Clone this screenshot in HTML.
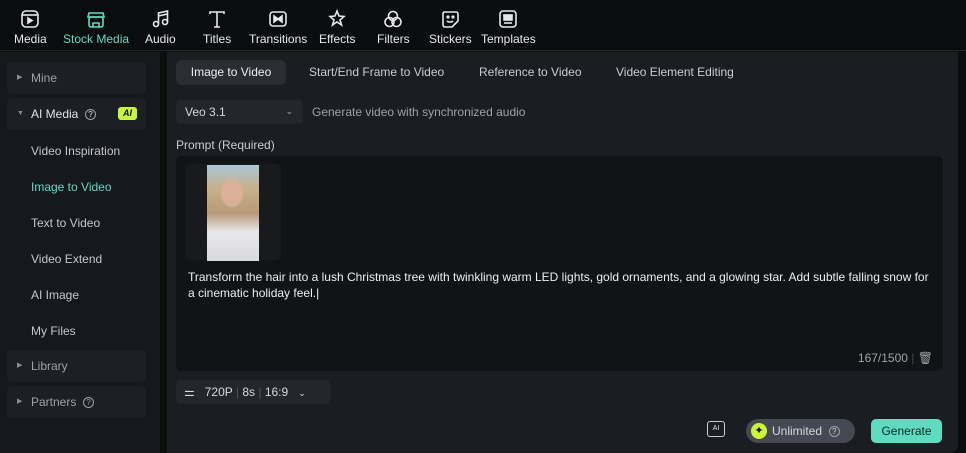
<!DOCTYPE html>
<html><head><meta charset="utf-8"><style>
*{box-sizing:border-box;margin:0;padding:0}
body{width:966px;height:453px;background:#0c0d0f;font-family:"Liberation Sans",sans-serif;color:#d6d8dc;position:relative;overflow:hidden;font-size:12px}
.top{position:absolute;left:0;top:0;width:966px;height:51px;background:#0b0c0e;border-bottom:1px solid #23262b}
.tb{position:absolute;top:8px;text-align:center;font-size:12px;color:#e6e8ea}
.tb svg{display:block;margin:0 auto 2px;width:22px;height:22px}
.side{position:absolute;left:0;top:52px;width:160px;height:401px;background:#15181c}
.sh{position:absolute;left:7px;width:139px;height:32px;background:#1c1f24;border-radius:5px;color:#9ea2a8;font-size:12px;line-height:32px;padding-left:24px}
.sh .tri{position:absolute;left:10px;top:0;font-size:7px;color:#8a8e94}
.si{position:absolute;left:31px;font-size:12px;color:#c4c7cb}
.main{position:absolute;left:167px;top:52px;width:791px;height:401px;background:#1a1d21;border-radius:0 0 8px 0}
.tab{position:absolute;top:8px;height:25px;line-height:25px;font-size:12px;color:#c9ccd0}
.q{display:inline-block;width:11px;height:11px;border:1px solid #9ea2a8;border-radius:50%;font-size:8px;line-height:9px;text-align:center;vertical-align:middle}
</style></head><body>
<div class="top">
<div class="tb" style="left:14px">
<svg viewBox="0 0 22 22" fill="none" stroke="#e6e8ea" stroke-width="1.6"><rect x="3" y="3" width="16" height="16" rx="4"/><line x1="3" y1="7" x2="19" y2="7"/><path d="M9 10l4 2.5-4 2.5z" fill="#e6e8ea"/></svg>Media</div>
<div class="tb" style="left:63px;color:#5fdcc0">
<svg viewBox="0 0 22 22" fill="none" stroke="#5fdcc0" stroke-width="1.6"><path d="M4 5h14l1 4H3z"/><rect x="4" y="9" width="14" height="10" rx="2"/><path d="M8 19v-4h6v4"/></svg>Stock Media</div>
<div class="tb" style="left:145px">
<svg viewBox="0 0 22 22" fill="none" stroke="#e6e8ea" stroke-width="1.6"><circle cx="7" cy="16" r="2.5"/><circle cx="16" cy="14" r="2.5"/><path d="M9.5 16V5l9-2v11M9.5 8l9-2"/></svg>Audio</div>
<div class="tb" style="left:203px">
<svg viewBox="0 0 22 22" fill="none" stroke="#e6e8ea" stroke-width="1.6"><path d="M4 6V4h14v2M11 4v15M8 19h6"/></svg>Titles</div>
<div class="tb" style="left:249px">
<svg viewBox="0 0 22 22" fill="none" stroke="#e6e8ea" stroke-width="1.6"><rect x="3" y="4" width="16" height="14" rx="3"/><path d="M7 8l4 3-4 3zM15 8l-4 3 4 3z" fill="#e6e8ea"/></svg>Transitions</div>
<div class="tb" style="left:319px">
<svg viewBox="0 0 22 22" fill="none" stroke="#e6e8ea" stroke-width="1.6"><path d="M11 3l2 5 5 .5-4 3.5 1.5 5L11 14l-4.5 3 1.5-5-4-3.5 5-.5z"/></svg>Effects</div>
<div class="tb" style="left:377px">
<svg viewBox="0 0 22 22" fill="none" stroke="#e6e8ea" stroke-width="1.6"><circle cx="11" cy="8" r="4.5"/><circle cx="7.5" cy="14" r="4.5"/><circle cx="14.5" cy="14" r="4.5"/></svg>Filters</div>
<div class="tb" style="left:429px">
<svg viewBox="0 0 22 22" fill="none" stroke="#e6e8ea" stroke-width="1.6"><path d="M5 4h12a2 2 0 012 2v7l-6 6H6a2 2 0 01-2-2V6a2 2 0 011-2z"/><path d="M8 13c1.5 1.5 4.5 1.5 6 0"/><circle cx="9" cy="9" r=".8"/><circle cx="14" cy="9" r=".8"/></svg>Stickers</div>
<div class="tb" style="left:481px">
<svg viewBox="0 0 22 22" fill="none" stroke="#e6e8ea" stroke-width="1.6"><rect x="3" y="3" width="16" height="16" rx="3"/><rect x="7" y="7" width="8" height="5" fill="#e6e8ea"/><line x1="7" y1="15" x2="15" y2="15"/></svg>Templates</div>
</div>

<div class="side">
<div class="sh" style="top:10px"><span class="tri">▶</span>Mine</div>
<div class="sh" style="top:46px;color:#e2e4e7"><span class="tri">▼</span>AI Media &nbsp;<span class="q">?</span><span style="position:absolute;left:111px;top:9px;width:19px;height:13px;background:#c9f53a;border-radius:3px;color:#111;font-size:9px;line-height:13px;text-align:center;font-weight:bold;font-style:italic">AI</span></div>
<div class="si" style="top:92px">Video Inspiration</div>
<div class="si" style="top:128px;color:#5fdcc0">Image to Video</div>
<div class="si" style="top:164px">Text to Video</div>
<div class="si" style="top:200px">Video Extend</div>
<div class="si" style="top:236px">AI Image</div>
<div class="si" style="top:272px">My Files</div>
<div class="sh" style="top:298px"><span class="tri">▶</span>Library</div>
<div class="sh" style="top:334px"><span class="tri">▶</span>Partners &nbsp;<span class="q">?</span></div>
</div>

<div class="main">
<div class="tab" style="left:9px;width:110px;background:#2a2d33;border-radius:6px;text-align:center;color:#eceef0">Image to Video</div>
<div class="tab" style="left:142px">Start/End Frame to Video</div>
<div class="tab" style="left:312px">Reference to Video</div>
<div class="tab" style="left:449px">Video Element Editing</div>
<div style="position:absolute;left:9px;top:48px;width:127px;height:24px;background:#23262b;border-radius:5px;line-height:24px;padding-left:9px;color:#d6d8dc">Veo 3.1<span style="position:absolute;right:10px;top:-1px;font-size:9px;color:#aaa">⌄</span></div>
<div style="position:absolute;left:145px;top:48px;line-height:24px;color:#9ea2a8">Generate video with synchronized audio</div>
<div style="position:absolute;left:9px;top:86px;color:#c9ccd0">Prompt (Required)</div>
<div style="position:absolute;left:9px;top:104px;width:767px;height:215px;background:#111316;border-radius:6px">
<div style="position:absolute;left:9px;top:8px;width:96px;height:96px;background:#181a1e;border-radius:6px"></div>
<div style="position:absolute;left:31px;top:9px;width:52px;height:96px;background:linear-gradient(180deg,#a9c6d6 0%,#c7b08a 25%,#b89a78 50%,#e8e8ea 70%,#d8d9dc 100%)"><div style="position:absolute;left:14px;top:14px;width:22px;height:28px;border-radius:50%;background:#d9b196"></div></div>
<div style="position:absolute;left:12px;top:113px;width:750px;color:#eceef0;font-size:12px;line-height:16px">Transform the hair into a lush Christmas tree with twinkling warm LED lights, gold ornaments, and a glowing star. Add subtle falling snow for a cinematic holiday feel.|</div>
<div style="position:absolute;right:10px;bottom:6px;color:#9ea2a8">167/1500 <span style="color:#444">|</span> 🗑</div>
</div>
<div style="position:absolute;left:9px;top:328px;width:155px;height:24px;background:#23262b;border-radius:5px;line-height:24px;padding-left:8px;color:#d6d8dc">⚌&nbsp;&nbsp; 720P <span style="color:#555">|</span> 8s <span style="color:#555">|</span> 16:9 &nbsp; <span style="font-size:9px">⌄</span></div>
<div style="position:absolute;left:540px;top:369px;width:18px;height:16px;border:1.4px solid #ccc;border-radius:3px;font-size:7px;color:#ddd;text-align:center;line-height:13px">AI</div>
<div style="position:absolute;left:579px;top:367px;width:109px;height:24px;background:#454a52;border-radius:12px;line-height:24px;padding-left:26px;color:#d6d8dc">Unlimited &nbsp;<span class="q">?</span><span style="position:absolute;left:5px;top:4px;width:16px;height:16px;border-radius:50%;background:#c9f53a;color:#111;font-size:11px;line-height:16px;text-align:center">✦</span></div>
<div style="position:absolute;left:704px;top:367px;width:71px;height:24px;background:#5fdcc0;border-radius:5px;line-height:24px;text-align:center;color:#0f2a24">Generate</div>
</div>
</body></html>
